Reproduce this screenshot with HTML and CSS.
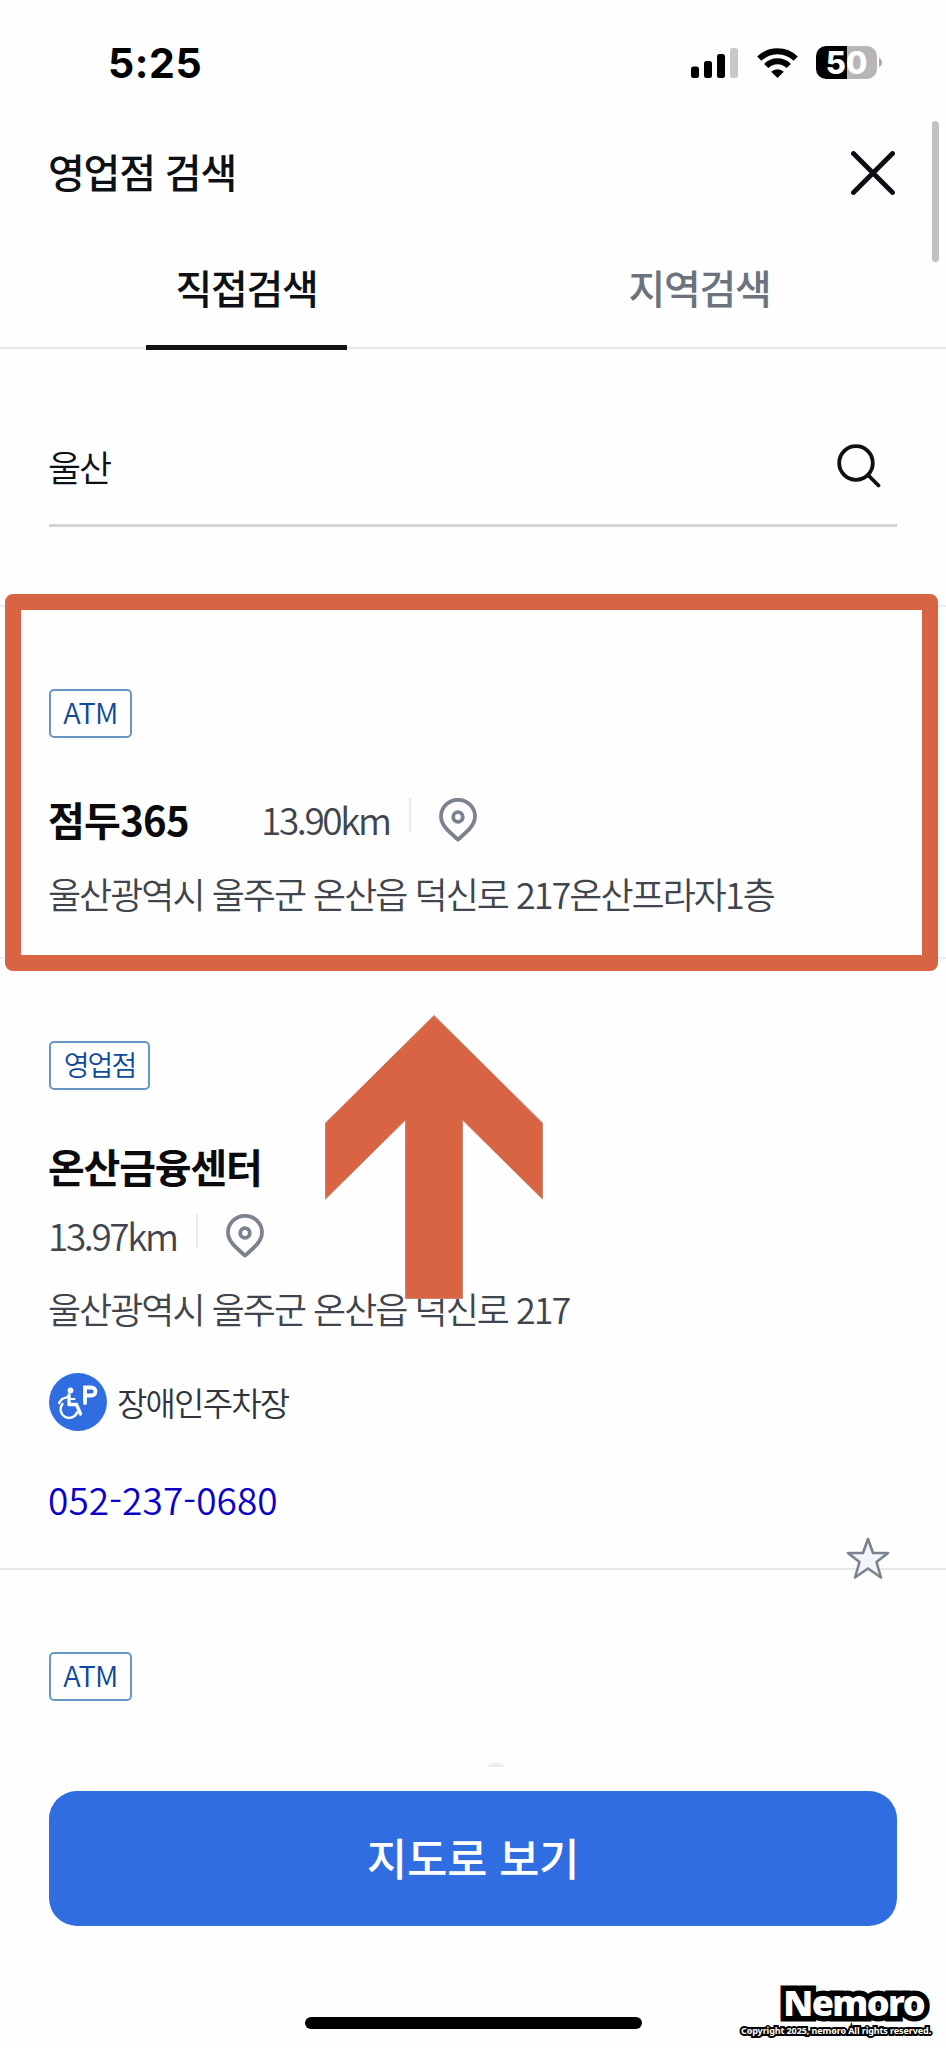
FILE: index.html
```html
<!DOCTYPE html>
<html lang="ko">
<head>
<meta charset="utf-8">
<title>영업점 검색</title>
<link rel="stylesheet" href="styles.css">
</head>
<body>
<main class="screen">
  <div class="status">
    <span class="time">5:25</span>
    <div class="indicators">
      <svg class="signal" viewBox="0 0 47 30"><g fill="#000"><rect y="18.500" width="8" height="11.500" rx="2.500"/><rect x="13" y="13" width="8" height="17" rx="2.500"/><rect x="26" y="6" width="8" height="24" rx="2.500"/></g><rect x="39" width="8" height="30" rx="2.500" fill="#c8c8c8"/></svg>
      <svg class="wifi" viewBox="0 0 41 30"><g fill="none" stroke="#000" stroke-width="6"><path d="M2.300 10.700a26 26 0 0 1 36.400 0"/><path d="M9.200 18a16 16 0 0 1 22.600 0"/></g><path d="M20.500 30l-6.300-6.300a9 9 0 0 1 12.600 0z"/></svg>
      <div class="battery"><span>50</span></div>
      <svg class="nub" viewBox="0 0 3 9"><path d="M0 0q3 1.500 3 4.500T0 9z" fill="#aaa"/></svg>
    </div>
  </div>

  <header class="header">
    <h1>영업점 검색</h1>
    <svg class="close" viewBox="0 0 44 44"><path d="M2.500 2.500l39 39M41.500 2.500l-39 39" fill="none" stroke="#0c0d12" stroke-width="4.800" stroke-linecap="round"/></svg>
  </header>

  <nav class="tabs">
    <div class="tab active"><span>직접검색</span></div>
    <div class="tab"><span>지역검색</span></div>
  </nav>

  <div class="search">
    <span>울산</span>
    <svg class="lens" viewBox="0 0 44 44"><g fill="none" stroke="#0d1116" stroke-width="3.800" stroke-linecap="round"><circle cx="19" cy="19" r="16.800"/><path d="M31.500 31.500l10 10"/></g></svg>
  </div>

  <section class="item first">
    <span class="tag">ATM</span>
    <div class="row">
      <h2>점두365</h2>
      <span class="dist">13.90km</span>
      <i class="bar"></i>
      <svg class="pin" viewBox="0 0 38 44"><g fill="none" stroke="#7d838e" stroke-width="3.800"><path d="M19 41.500C13 36 2 28.500 2 18.500a17 16.700 0 0 1 34 0C36 28.500 25 36 19 41.500z" stroke-linejoin="round"/><circle cx="19" cy="19" r="4.800"/></g></svg>
    </div>
    <p class="addr">울산광역시 울주군 온산읍 덕신로 217온산프라자1층</p>
  </section>

  <section class="item second">
    <span class="tag ko">영업점</span>
    <h2>온산금융센터</h2>
    <div class="row">
      <span class="dist">13.97km</span>
      <i class="bar"></i>
      <svg class="pin" viewBox="0 0 38 44"><g fill="none" stroke="#7d838e" stroke-width="3.800"><path d="M19 41.500C13 36 2 28.500 2 18.500a17 16.700 0 0 1 34 0C36 28.500 25 36 19 41.500z" stroke-linejoin="round"/><circle cx="19" cy="19" r="4.800"/></g></svg>
    </div>
    <p class="addr">울산광역시 울주군 온산읍 덕신로 217</p>
    <div class="service">
      <svg viewBox="0 0 58 58"><circle cx="29" cy="29" r="29" fill="#2f6de0"/><circle cx="21.500" cy="17.500" r="2.900" fill="#fff"/><g fill="none" stroke="#fff" stroke-linecap="round" stroke-linejoin="round"><path d="M20 22v9.500h7.500l4 9.500" stroke-width="3.400"/><path d="M20 23.500l-7 2.500-3 4" stroke-width="2.300"/><path d="M13.500 31a8.500 8.500 0 1 0 14.500 8.500" stroke-width="2.400"/><path d="M20 26h5.500" stroke-width="2.200"/><path d="M36 30V14.500h6.500a4 4 0 0 1 0 8H36" stroke-width="3.800" stroke-linejoin="miter"/></g></svg>
      <span>장애인주차장</span>
    </div>
    <a class="phone">052-237-0680</a>
    <svg class="star" viewBox="0 0 44 42"><path d="M22 2l5 14h15L30.500 25l4.500 15.500L22 31.500 9 40.500 13.500 25 2 16h15z" fill="#f2f6fa" stroke="#7d838e" stroke-width="2.600" stroke-linejoin="round"/></svg>
  </section>

  <section class="item third">
    <span class="tag">ATM</span>
    <svg class="peek" viewBox="0 0 20 6"><path d="M0 5Q10-4 20 5z" fill="#ececed"/></svg>
  </section>

  <footer class="footer">
    <div class="button"><span>지도로 보기</span></div>
    <div class="home"></div>
  </footer>

  <div class="scrollbar"></div>
  <div class="highlight"></div>
  <svg class="arrow" viewBox="0 0 218 284"><path d="M109 .5L217.500 108v76L137.500 105v178.500h-57V105L.5 184v-76z" fill="#d86444" stroke="#c98672" stroke-width="1"/></svg>
  <div class="mark">
    <div class="brand">Nemoro</div>
    <div class="copy">Copyright 2025, nemoro All rights reserved.</div>
  </div>
</main>
</body>
</html>
```

FILE: styles.css
```css
* { box-sizing: border-box; margin: 0; padding: 0; }
body { background: #fefefe; }
svg { display: block; flex: none; }
.screen {
  position: relative;
  width: 946px;
  height: 2048px;
  overflow: hidden;
  background: #fefefe;
  color: #0d1116;
  font-family: "Noto Sans CJK KR", sans-serif;
  white-space: nowrap;
}

.status {
  height: 110px;
  padding: 46px 64px 0 108px;
  display: flex;
  justify-content: space-between;
}
.time {
  font: 750 41px/35px Inter, sans-serif;
  color: #000;
  letter-spacing: 0.6px;
}
.indicators { display: flex; align-items: flex-start; }
.signal { width: 47px; height: 30px; margin-top: 2px; }
.wifi { width: 41px; height: 30px; margin: 2px 18px 0 19px; }
.battery {
  width: 61px;
  height: 33px;
  border-radius: 10px;
  background: linear-gradient(90deg, #000 31px, #b6b6b6 31px);
  color: #fff;
  text-align: center;
}
.battery span { font: 800 31px/34px Inter, sans-serif; }
.nub { width: 3px; height: 9px; margin: 12px 0 0 2px; }

.header {
  height: 126px;
  padding: 41px 51px 0 48px;
  display: flex;
  justify-content: space-between;
}
h1 {
  font-size: 40px;
  line-height: 40px;
  font-weight: 500;
  letter-spacing: -1.2px;
}
.close { width: 44px; height: 44px; }

.tabs {
  height: 114px;
  padding: 0 0 0 20px;
  display: flex;
  background: linear-gradient(#e5e7eb, #e5e7eb) 0 111px / 100% 2px no-repeat;
}
.tab {
  width: 453px;
  display: flex;
  justify-content: center;
  color: #6c727e;
}
.tab span {
  width: 201px;
  height: 114px;
  padding-top: 30px;
  text-align: center;
  font-size: 40px;
  line-height: 42px;
  font-weight: 500;
  letter-spacing: -1.3px;
}
.active { color: #0d1116; }
.active span { border-bottom: 5px solid #111317; }

.search {
  height: 113px;
  margin: 64px 49px 0;
  padding: 30px 16px 0 0;
  display: flex;
  justify-content: space-between;
  border-bottom: 3px solid #d1d4d8;
  font-size: 36px;
  line-height: 44px;
  font-weight: 350;
  letter-spacing: -2px;
}
.search span { margin-left: -1px; }
.lens { width: 44px; height: 44px; }

.item {
  padding-left: 49px;
  border-top: 2px solid #eceef1;
  font-weight: 350;
}
.first { height: 352px; margin-top: 78px; padding-top: 82px; }
.second { position: relative; height: 611px; padding-top: 82px; }
.third { height: 199px; padding-top: 82px; border-color: #e5e7eb; }
.tag {
  display: flex;
  align-items: center;
  justify-content: center;
  width: 83px;
  height: 49px;
  padding: 0 0 4px 0;
  border: 2px solid #6798c4;
  border-radius: 5px;
  color: #0e4a97;
  font-size: 29px;
  line-height: 41px;
  letter-spacing: -0.6px;
}
.ko { width: 101px; padding-bottom: 3px; font-size: 28px; letter-spacing: -2px; }
h2 {
  font-size: 40px;
  line-height: 42px;
  font-weight: 700;
  letter-spacing: -1.2px;
  color: #0b0b0d;
}
.row { display: flex; height: 44px; }
.first .row { margin-top: 60px; }
.first h2 {
  width: 213px;
  margin-left: -1px;
  letter-spacing: -0.7px;
}
.dist {
  width: 129px;
  font-size: 37px;
  line-height: 42px;
  letter-spacing: -2.4px;
  color: #40454d;
}
.second .dist { margin-left: -1px; }
.bar { width: 2px; height: 34px; margin: 0 28px 0 19px; background: #e8ebee; }
.pin { width: 38px; height: 44px; }
.addr {
  margin: 29px 0 1px -1px;
  font-size: 36px;
  line-height: 44px;
  letter-spacing: -2px;
  color: #40454d;
}
.second h2 { margin: 55px 0 0 -1px; }
.second .row { margin-top: 27px; }
.second .addr { margin: 28px 0 2px -1px; }
.service {
  display: flex;
  align-items: center;
  gap: 10px;
  margin-top: 43px;
  font-size: 33px;
  line-height: 58px;
  letter-spacing: -1.8px;
  color: #30353c;
}
.service svg { width: 58px; height: 58px; }
.phone {
  display: block;
  margin: 46px 0 0 -1px;
  font-size: 37px;
  line-height: 44px;
  letter-spacing: 0.1px;
  color: #0b00c9;
}
.star {
  position: absolute;
  left: 846px;
  bottom: -11px;
  width: 44px;
  height: 42px;
}
.peek { width: 20px; height: 6px; margin: 61px 0 0 437px; }

.footer { height: 281px; padding: 24px 49px 0; }
.button {
  height: 135px;
  border-radius: 28px;
  background: #2f6de0;
  color: #fff;
  display: flex;
  justify-content: center;
}
.button span {
  padding-top: 41px;
  font-size: 44px;
  line-height: 50px;
  font-weight: 500;
  letter-spacing: -0.4px;
}
.home {
  width: 337px;
  height: 12px;
  margin: 91px 0 0 256px;
  border-radius: 6px;
  background: #000;
}

.scrollbar {
  position: absolute;
  left: 932px;
  top: 121px;
  width: 7px;
  height: 141px;
  border-radius: 4px;
  background: #c1c1c1;
}
.highlight {
  position: absolute;
  left: 5px;
  top: 594px;
  width: 933px;
  height: 377px;
  border: 16px solid #d86444;
  border-radius: 8px;
}
.arrow { position: absolute; left: 325px; top: 1015px; width: 218px; height: 284px; }
.mark {
  position: absolute;
  right: 15px;
  bottom: 10px;
  display: flex;
  flex-direction: column;
  align-items: flex-end;
  color: #fff;
  font-family: "Noto Sans", sans-serif;
  paint-order: stroke fill;
  stroke-linejoin: round;
}
.brand {
  margin-right: 7px;
  font-size: 36px;
  line-height: 42px;
  font-weight: 900;
  letter-spacing: -1.6px;
  -webkit-text-stroke: 11px #000;
}
.copy {
  font-size: 9px;
  line-height: 14px;
  font-weight: 700;
  letter-spacing: -0.1px;
  -webkit-text-stroke: 4px #000;
}
```
